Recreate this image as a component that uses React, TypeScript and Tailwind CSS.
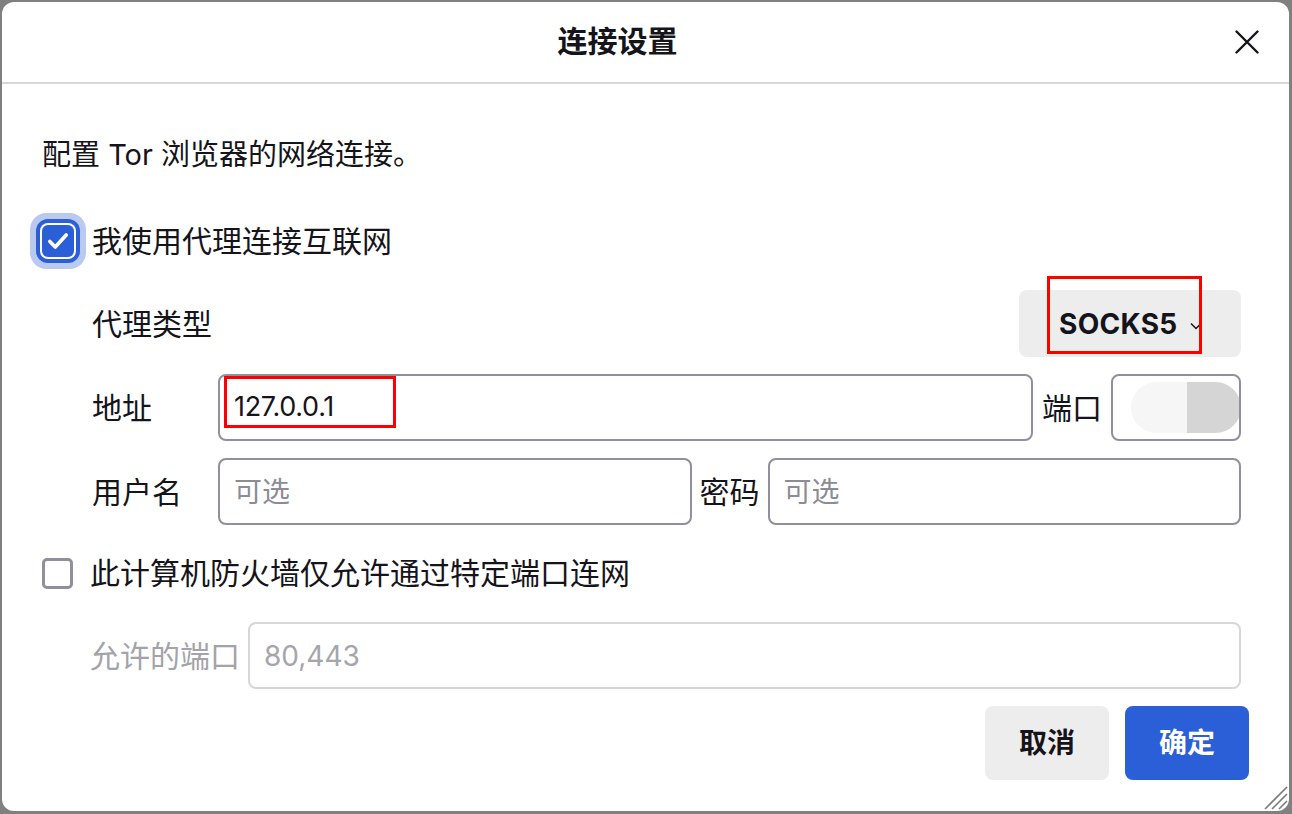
import React from 'react';

const FONT = { fontFamily: 'Inter, "Noto Sans CJK SC", sans-serif' };

function TextInput({ value, placeholder, className = '', disabled = false }: { value?: string; placeholder?: string; className?: string; disabled?: boolean }) {
  return (
    <div
      className={`h-[67px] rounded-[8px] border-2 bg-white flex items-center px-[14px] text-[28px] ${
        disabled ? 'border-[#d6d6dc]' : 'border-[#8f8f9d]'
      } ${className}`}
    >
      {value ? (
        <span className="text-[#15141a] text-[27px] tracking-[-0.3px]">{value}</span>
      ) : (
        <span className={disabled ? 'text-[#a5a5ab]' : 'text-[#8c8c94]'}>{placeholder}</span>
      )}
    </div>
  );
}

export default function App() {
  return (
    <div className="w-[1292px] h-[814px] bg-[#808080] pt-[2px] pl-[2px] pr-[3px] pb-[3px]" style={FONT}>
      <div className="relative w-full h-full bg-white rounded-[12px] flex flex-col text-[#15141a]">
        {/* Header */}
        <div className="relative h-[82px] shrink-0 flex items-center justify-center border-b-2 border-[#d7d7db]">
          <h1 className="text-[30px] font-bold leading-[36px] mt-[-2px] mr-[56px]">连接设置</h1>
          <button className="absolute right-[30px] top-[28px] w-[24px] h-[24px]">
            <svg width="24" height="24" viewBox="0 0 24 24" fill="none" stroke="#15141a" strokeWidth="2.4" strokeLinecap="round">
              <path d="M1.5 1.5l21 21M22.5 1.5l-21 21" />
            </svg>
          </button>
        </div>

        {/* Body */}
        <div className="flex flex-col pl-[40px] pr-[40px]">
          <p className="mt-[53px] text-[29px] leading-[36px]">配置 Tor 浏览器的网络连接。</p>

          <label className="mt-[46px] h-[44px] flex items-center">
            <span className="w-[32px] h-[32px] rounded-[6px] bg-[#2a5fd8] flex items-center justify-center shadow-[0_0_0_2px_#ffffff,0_0_0_6px_#2a5fd8,0_0_0_12px_#b9c9ef]">
              <svg width="24" height="24" viewBox="0 0 22 22" fill="none" stroke="#ffffff" strokeWidth="3.4" strokeLinecap="round" strokeLinejoin="round">
                <path d="M3.5 11.5l5 5L18.5 5.5" />
              </svg>
            </span>
            <span className="ml-[18px] text-[30px] leading-[36px]">我使用代理连接互联网</span>
          </label>

          <div className="ml-[50px] mr-[8px] flex flex-col">
            {/* Proxy type */}
            <div className="mt-[27px] h-[67px] flex items-center">
              <span className="text-[30px] leading-[36px]">代理类型</span>
              <div className="relative ml-auto w-[222px] h-[67px] rounded-[8px] bg-[#ededed] flex items-center pl-[40px]">
                <span className="text-[28px] font-bold tracking-[0.3px]">SOCKS5</span>
                <svg className="ml-[12px] mt-[4px]" width="12" height="8" viewBox="0 0 12 8" fill="none" stroke="#15141a" strokeWidth="1.5">
                  <path d="M1 1.5l5 5 5-5" />
                </svg>
                <div className="absolute left-[28px] top-[-14px] w-[155px] h-[78px] border-[3px] border-[#ff0000]" />
              </div>
            </div>

            {/* Address */}
            <div className="mt-[17px] flex items-center">
              <span className="w-[126px] shrink-0 text-[30px] leading-[36px]">地址</span>
              <div className="relative flex-1">
                <TextInput value="127.0.0.1" />
                <div className="absolute left-[6px] top-[2px] w-[172px] h-[52px] border-[3px] border-[#ff0000]" />
              </div>
              <span className="mx-[9px] text-[30px] leading-[36px]">端口</span>
              <div className="relative w-[130px] h-[67px] rounded-[8px] border-2 border-[#8f8f9d] overflow-hidden">
                <div className="absolute left-[18px] top-[6px] w-[110px] h-[51px] rounded-full overflow-hidden flex">
                  <div className="w-[56px] bg-[#f6f6f6]" />
                  <div className="flex-1 bg-[#d5d5d5]" />
                </div>
              </div>
            </div>

            {/* Username / password */}
            <div className="mt-[17px] flex items-center">
              <span className="w-[126px] shrink-0 text-[30px] leading-[36px]">用户名</span>
              <TextInput placeholder="可选" className="flex-1" />
              <span className="mx-[8px] text-[30px] leading-[36px]">密码</span>
              <TextInput placeholder="可选" className="flex-1" />
            </div>
          </div>

          {/* Firewall */}
          <label className="mt-[30px] h-[36px] flex items-center">
            <span className="w-[31px] h-[31px] rounded-[5px] border-[3px] border-[#8f8f9d] bg-white" />
            <span className="ml-[17px] text-[30px] leading-[36px]">此计算机防火墙仅允许通过特定端口连网</span>
          </label>

          <div className="mt-[31px] ml-[48px] mr-[8px] flex items-center">
            <span className="text-[30px] leading-[36px] text-[#a3a3a9] mr-[8px]">允许的端口</span>
            <TextInput placeholder="80,443" className="flex-1" disabled />
          </div>

          {/* Buttons */}
          <div className="mt-[17px] flex justify-end gap-[16px]">
            <button className="w-[124px] h-[74px] rounded-[8px] bg-[#ededed] text-[28px] font-bold text-[#15141a]">取消</button>
            <button className="w-[124px] h-[74px] rounded-[8px] bg-[#2a5fd8] text-[28px] font-bold text-white">确定</button>
          </div>
        </div>

        {/* Resize grip */}
        <svg className="absolute right-[1px] bottom-[1px]" width="26" height="26" viewBox="0 0 26 26" fill="none" stroke="#7a7a7a" strokeWidth="1.6">
          <path d="M25 3L3 25M25 10L10 25M25 17L17 25" />
        </svg>
      </div>
    </div>
  );
}
